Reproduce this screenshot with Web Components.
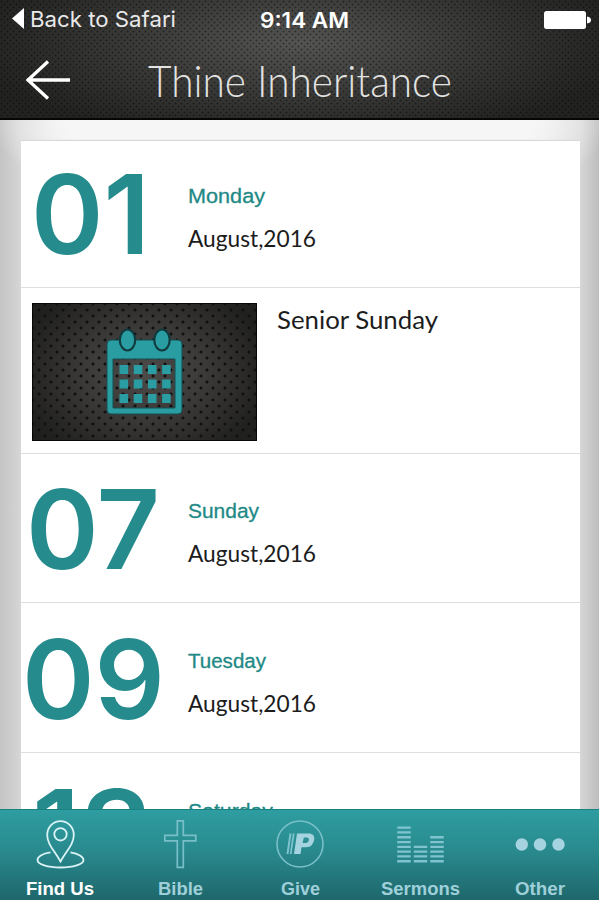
<!DOCTYPE html>
<html lang="en">
<head>
<meta charset="utf-8">
<title>Thine Inheritance</title>
<style>
html,body{margin:0;height:100%;overflow:hidden}
body{width:599px;height:900px;background:#fff;font-family:Inter,"Liberation Sans",sans-serif}
</style>
</head>
<body>
<app-screen>
  <app-header slot="header" heading="Thine Inheritance"></app-header>
  <event-date day="01" x="31" w="119" weekday="Monday" ww="77" style="height:147px"></event-date>
  <event-item label="Senior Sunday"></event-item>
  <event-date day="07" x="26" w="134" weekday="Sunday" ww="71" style="height:149px;padding-top:2px"></event-date>
  <event-date day="09" x="21.5" w="143" weekday="Tuesday" ww="78" style="height:150px;padding-top:3px"></event-date>
  <event-date day="13" x="32" w="121" weekday="Saturday" ww="85" style="height:150px;padding-top:3px"></event-date>
  <tab-bar slot="tabs">
    <tab-item active label="Find Us" w="68">
      <svg width="50" height="50" viewBox="0 0 50 50" fill="none" stroke="#d9f3f6" stroke-width="1.8"><path d="M25.500 42.500C19 31 12.200 25 12.200 16a13.300 13.800 0 0 1 26.600 0C38.800 25 32 31 25.500 42.500Z"/><circle cx="25.500" cy="15.300" r="6.200"/><path d="M15.500 33.400C7 34.500 2.500 38 2.500 41c0 4.500 10.500 7.500 23 7.500s23-3 23-7.500c0-3-5-6.500-13-7.600"/></svg>
    </tab-item>
    <tab-item label="Bible" w="45">
      <svg width="50" height="50" viewBox="0 0 50 50" fill="none" stroke="#79bfc9" stroke-width="1.700"><path d="M22.300 1.800h6v14.500h12.500v5.500H28.300v26.500h-6V21.800H9.800v-5.500h12.500Z"/></svg>
    </tab-item>
    <tab-item label="Give" w="39">
      <svg width="50" height="50" viewBox="0 0 50 50"><circle cx="25" cy="25" r="23" fill="none" stroke="#79bfc9" stroke-width="1.600"/><path d="M14.500 14.500h2L13.500 35h-2ZM17.800 14.500h1.800L16.600 35h-1.800Z" fill="#7fc3cf"/><path fill-rule="evenodd" d="M22 14.500H34.500q6 .5 4.500 7-1.500 6.800-8 6.800h-4.500L25.500 35h-6.500ZM28.800 18.500l-1.200 5.500h3.500q2.200-.2 2.700-2.800.5-2.700-2-2.700Z" fill="#a5d4e0"/></svg>
    </tab-item>
    <tab-item label="Sermons" w="79">
      <svg width="50" height="50" viewBox="0 0 50 50" fill="none" stroke="#7fc3cf" stroke-width="13.500"><path d="M9 7.500V44" stroke-dasharray="2.300 2.500"/><path d="M25.500 26.700V44" stroke-dasharray="2.300 2.500"/><path d="M42 17.100V44" stroke-dasharray="2.300 2.500"/></svg>
    </tab-item>
    <tab-item label="Other" w="50">
      <svg width="50" height="50" viewBox="0 0 50 50" fill="#a5d4e0"><circle cx="6.800" cy="25.500" r="6.200"/><circle cx="25" cy="25.500" r="6.200"/><circle cx="43.500" cy="25.500" r="6.200"/></svg>
    </tab-item>
  </tab-bar>
</app-screen>
<script>
/* One line of text set to an exact width; the baseline is the bottom of its box. */
class FitText extends HTMLElement{
  connectedCallback(){
    const a=(n,d)=>this.getAttribute(n)||d;
    const s=this.attachShadow({mode:'open'});
    s.innerHTML=`<style>:host{display:block;flex:none}svg{display:block;overflow:visible}</style>
    <svg width="${a('w')}" height="${a('h',a('size'))}"><text x="0" y="${a('h',a('size'))}" fill="currentColor" stroke="currentColor" stroke-width="${a('bold','0')}" font-size="${a('size')}" font-weight="${a('weight','400')}" font-family="${a('font','Inter')}, sans-serif" textLength="${a('w')}" lengthAdjust="spacingAndGlyphs">${this.getAttribute('text')}</text></svg>`;
  }
}
class AppScreen extends HTMLElement{
  constructor(){super();this.attachShadow({mode:'open'}).innerHTML=`<style>
  :host{display:grid;grid-template-rows:120px 689px 91px;width:599px;height:900px}
  main{overflow:hidden;padding:21px 20px 0 21px;box-sizing:border-box;
   background:radial-gradient(ellipse 310px 110px at 50% 0,#f6f6f6 75%,rgba(246,246,246,0) 100%),linear-gradient(90deg,#c4c4c4 0,#d6d6d6 21px,#e4e4e4 60px,#e4e4e4 540px,#d6d6d6 580px,#bebebe 599px)}
  .card{background:#fff;height:700px;box-shadow:0 -1px 1px #d8d8d8}
  </style><slot name="header"></slot><main><div class="card"><slot></slot></div></main><slot name="tabs"></slot>`}
}
class AppHeader extends HTMLElement{
  connectedCallback(){this.attachShadow({mode:'open'}).innerHTML=`<style>
  :host{display:flex;flex-direction:column;color:#fff;box-sizing:border-box;border-bottom:2px solid #060606;height:120px;
   background:radial-gradient(circle at 1.500px 1.500px,rgba(0,0,0,.42) 0,rgba(0,0,0,.32) .7px,transparent 1.400px) 0 0/6px 6px,
   radial-gradient(circle at 1.500px 1.500px,rgba(0,0,0,.42) 0,rgba(0,0,0,.32) .7px,transparent 1.400px) 3px 3px/6px 6px,
   radial-gradient(ellipse 330px 100px at 50% 36%,#545452 0,#3a3a39 50%,#222221 100%)}
  .status{height:27px;display:grid;grid-template-columns:260px 1fr 56px;align-items:end}
  .back{display:flex;align-items:end;gap:6px;padding-left:12px;color:#e9e9e9}
  .back svg{margin-bottom:-2px}
  .nav{display:flex;padding-left:25px;height:70px;align-items:end}
  .nav svg{margin-bottom:-3px;margin-right:77px}
  .bat{margin-bottom:-3px}
  svg{display:block}
  </style>
  <div class="status"><div class="back"><svg width="12" height="21" viewBox="0 0 12 21"><path d="M0 10.500L12 0v21Z" fill="#fff"/></svg><fit-text text="Back to Safari" w="146" size="22"></fit-text></div>
  <fit-text text="9:14 AM" w="89" size="21.500" weight="600"></fit-text>
  <svg class="bat" width="48" height="19" viewBox="0 0 48 19"><rect x="0" y="0" width="42" height="18" rx="2.500" fill="#fff"/><path d="M43 5.500q4 .5 4 3.500t-4 3.500Z" fill="#fff"/></svg></div>
  <div class="nav"><svg width="46" height="40" viewBox="0 0 46 40" fill="none" stroke="#fff" stroke-width="3.300"><path d="M23 1.500L3 20l20 18.500M2 20h43"/></svg>
  <fit-text style="color:#e2e2e0" text="${this.getAttribute('heading')}" w="304" size="43" weight="300" font="Lato"></fit-text></div>`}
}
class EventDate extends HTMLElement{
  connectedCallback(){const g=n=>this.getAttribute(n);this.attachShadow({mode:'open'}).innerHTML=`<style>
  :host{display:grid;grid-template-columns:167px 1fr;grid-template-rows:100%;box-sizing:border-box;border-bottom:1px solid #dedede}
  .day{padding-top:3px;padding-left:${Math.max(0,g('x')-21)}px;color:#258b8d}
  .info{display:flex;flex-direction:column;gap:24px;padding-top:41px}
  .wk{color:#218985}.mo{color:#1c1c1c}
  </style><div class="day"><fit-text text="${g('day')}" w="${g('w')}" size="110" weight="600"></fit-text></div>
  <div class="info"><fit-text class="wk" text="${g('weekday')}" w="${g('ww')}" size="20.500" h="21" font="Liberation Sans" bold=".3"></fit-text>
  <fit-text class="mo" text="August,2016" w="128" size="23" h="20" font="Lato"></fit-text></div>`}
}
class EventItem extends HTMLElement{
  connectedCallback(){
    let cells='';for(let r=0;r<3;r++)for(let c=0;c<4;c++)cells+=`<rect x="${87.500+c*14.200}" y="${62+r*14.500}" width="8.600" height="9"/>`;
    this.attachShadow({mode:'open'}).innerHTML=`<style>
  :host{display:flex;height:166px;box-sizing:border-box;border-bottom:1px solid #dedede;padding:15px 0 0 11px;gap:20px}
  .pic{width:225px;height:138px;box-sizing:border-box;border:1.500px solid #080808;
   background:radial-gradient(circle,#0c0c0c 0,#111 .8px,transparent 2.100px) 0 0/12px 12px,
   radial-gradient(circle,#0c0c0c 0,#111 .8px,transparent 2.100px) 6px 6px/12px 12px,
   radial-gradient(ellipse 125px 95px,#4d4b4a 0,#3b3937 50%,#20201f 100%)}
  .pic svg{display:block;margin:-1px}
  .t{padding-top:6px;color:#1d1d1d}
  </style><div class="pic"><svg width="225" height="138" viewBox="0 0 225 138">
  <path fill="#299da1" stroke="#174e51" stroke-width="1" fill-rule="evenodd" d="M79 37h67q4 0 4 4v66q0 4-4 4H79q-4 0-4-4V41q0-4 4-4ZM81 56v49h62V56Z"/>
  <g fill="#299da1">${cells}</g><g fill="#299da1" stroke="#113b3e" stroke-width="2.200"><ellipse cx="95.500" cy="37" rx="7.700" ry="10.500"/><ellipse cx="130" cy="37" rx="7.700" ry="10.500"/></g></svg></div>
  <div class="t"><fit-text text="${this.getAttribute('label')}" w="161" size="25" h="20" font="Lato"></fit-text></div>`}
}
class TabBar extends HTMLElement{
  constructor(){super();this.attachShadow({mode:'open'}).innerHTML=`<style>
  :host{display:grid;grid-template-columns:repeat(5,120px);box-sizing:border-box;border-top:1px solid #17827f;height:91px;background:linear-gradient(#2e9da1,#298a8e 45%,#1e676b)}
  </style><slot></slot>`}
}
class TabItem extends HTMLElement{
  connectedCallback(){const on=this.hasAttribute('active');this.attachShadow({mode:'open'}).innerHTML=`<style>
  :host{display:flex;flex-direction:column;align-items:center;padding-top:9px;gap:6px;color:${on?'#fff':'#9fd0da'}}
  ::slotted(svg){display:block}
  </style><slot></slot><fit-text text="${this.getAttribute('label')}" w="${this.getAttribute('w')}" size="19" weight="700" font="Liberation Sans" h="20"></fit-text>`}
}
customElements.define('fit-text',FitText);
customElements.define('app-screen',AppScreen);
customElements.define('app-header',AppHeader);
customElements.define('event-date',EventDate);
customElements.define('event-item',EventItem);
customElements.define('tab-bar',TabBar);
customElements.define('tab-item',TabItem);
</script>
</body>
</html>
